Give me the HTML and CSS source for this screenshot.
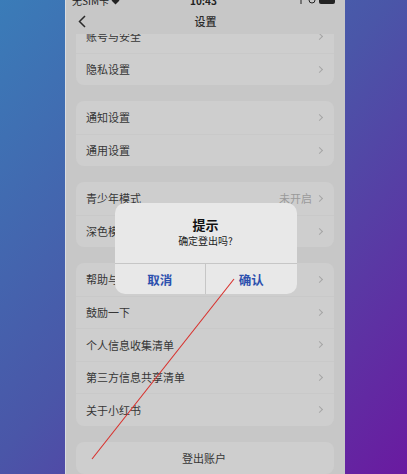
FILE: index.html
```html
<!DOCTYPE html>
<html lang="zh-CN">
<head>
    <meta charset="UTF-8">
    <meta name="viewport" content="width=device-width, initial-scale=1.0">
    <title>设置</title>
    <link rel="stylesheet" href="styles.css">
</head>
<body>
    <div class="stage">
        <div class="phone">
            <div class="status">
                <span class="carrier">无SIM卡 <svg width="9" height="7" viewBox="0 0 9 7"><path d="M0.5 2.5 Q4.5 -0.5 8.5 2.5 L4.5 6.5 Z" fill="#222"/></svg></span>
                <span class="clock">10:43</span>
                <span class="status-icons">
                    <svg width="8" height="8" viewBox="0 0 8 8"><path d="M4 0 L4 8 M1 3 L4 0 L7 3" stroke="#222" fill="none"/></svg>
                    <svg width="8" height="8" viewBox="0 0 8 8"><circle cx="4" cy="4" r="3" stroke="#222" fill="none"/></svg>
                    <span class="battery"></span>
                </span>
            </div>

            <header class="navbar">
                <svg class="back" width="8" height="13" viewBox="0 0 8 13"><polyline points="7,1 1.5,6.5 7,12" fill="none" stroke="#2a2a2a" stroke-width="1.5"/></svg>
                <h1 class="nav-title">设置</h1>
                <span class="nav-side"></span>
            </header>

            <main class="scroll">
                <div class="scroll-inner">
                    <div class="card">
                        <div class="row"><span>账号与安全</span><i class="chev"></i></div>
                        <div class="row"><span>隐私设置</span><i class="chev"></i></div>
                    </div>
                    <div class="card">
                        <div class="row"><span>通知设置</span><i class="chev"></i></div>
                        <div class="row"><span>通用设置</span><i class="chev"></i></div>
                    </div>
                    <div class="card">
                        <div class="row"><span>青少年模式</span><em class="value">未开启</em><i class="chev"></i></div>
                        <div class="row"><span>深色模式</span><i class="chev"></i></div>
                    </div>
                    <div class="card">
                        <div class="row"><span>帮助与反馈</span><i class="chev"></i></div>
                        <div class="row"><span>鼓励一下</span><i class="chev"></i></div>
                        <div class="row"><span>个人信息收集清单</span><i class="chev"></i></div>
                        <div class="row"><span>第三方信息共享清单</span><i class="chev"></i></div>
                        <div class="row"><span>关于小红书</span><i class="chev"></i></div>
                    </div>
                    <div class="card">
                        <div class="row row-center"><span>登出账户</span></div>
                    </div>
                </div>
            </main>

            <!-- 确认弹窗 -->
            <div class="mask">
                <div class="alert">
                    <div class="alert-body">
                        <h2>提示</h2>
                        <p>确定登出吗?</p>
                    </div>
                    <div class="alert-actions">
                        <button>取消</button>
                        <button>确认</button>
                    </div>
                </div>
            </div>
        </div>

        <svg class="mark" width="407" height="474" viewBox="0 0 407 474">
            <line x1="92" y1="459" x2="234" y2="279" stroke="#d8302c" stroke-width="1.1"/>
        </svg>
    </div>
</body>
</html>
```

FILE: styles.css
```css
* {
    box-sizing: border-box;
}

body {
    margin: 0;
    font-family: "Noto Sans CJK SC", "Noto Sans", sans-serif;
}

.stage {
    position: relative;
    width: 407px;
    height: 474px;
    overflow: hidden;
    background: linear-gradient(to bottom right, #3a7cb8, #4a56a8 48%, #6a1aa0);
}

.phone {
    position: relative;
    width: 280px;
    height: 474px;
    margin-left: 65px;
    background: #c7c7c7;
    border-left: 1px solid #d9dbe0;
    overflow: hidden;
    display: flex;
    flex-direction: column;
    color: #333;
}

/* 状态栏 */
.status {
    height: 20px;
    margin-top: -10px;
    display: grid;
    grid-template-columns: 1fr auto 1fr;
    align-items: center;
    padding: 0 10px 0 6px;
    font-size: 10px;
    color: #222;
}

.carrier svg {
    vertical-align: middle;
}

.clock {
    font-weight: bold;
}

.status-icons {
    display: flex;
    align-items: center;
    justify-content: flex-end;
    gap: 3px;
}

.battery {
    width: 16px;
    height: 8px;
    background: #222;
    border-radius: 2px;
}

/* 导航栏 */
.navbar {
    height: 24px;
    display: grid;
    grid-template-columns: 1fr auto 1fr;
    align-items: center;
    position: relative;
    z-index: 1;
    background: #c7c7c7;
    padding: 0 12px 2px 12px;
}

.nav-title {
    margin: 0;
    font-size: 11px;
    font-weight: 500;
    color: #2a2a2a;
}

/* 列表 */
.scroll {
    flex: 1;
    overflow: hidden;
}

.scroll-inner {
    margin-top: -14px;
    display: flex;
    flex-direction: column;
    gap: 16px;
    padding: 0 11px 0 10px;
}

.card {
    background: #cecece;
    border-radius: 8px;
}

.row {
    height: 32.5px;
    display: flex;
    align-items: center;
    padding: 0 12px 0 10px;
    font-size: 11px;
    color: #363636;
    border-top: 1px solid #c9c9c9;
}

.row:first-child {
    border-top: none;
}

.row span {
    flex: 1;
}

.row-center span {
    text-align: center;
}

.value {
    font-style: normal;
    color: #9a9a9a;
    margin-right: 5px;
}

.chev {
    width: 5px;
    height: 5px;
    border-top: 1px solid #a6a6a6;
    border-right: 1px solid #a6a6a6;
    transform: rotate(45deg);
}

/* 弹窗 */
.mask {
    position: absolute;
    inset: 0;
    display: flex;
    justify-content: center;
    align-items: flex-start;
    padding-top: 203px;
}

.alert {
    width: 182px;
    background: #e8e8e8;
    border-radius: 10px;
    overflow: hidden;
}

.alert-body {
    height: 60px;
    padding-top: 13px;
    text-align: center;
}

.alert-body h2 {
    margin: 0;
    font-size: 13px;
    line-height: 18px;
    color: #111;
}

.alert-body p {
    margin: 0;
    font-size: 10px;
    line-height: 14px;
    color: #222;
}

.alert-actions {
    display: flex;
    border-top: 1px solid #c6c6c6;
}

.alert-actions button {
    flex: 1;
    height: 30px;
    border: none;
    background: none;
    font-family: inherit;
    font-size: 12.5px;
    font-weight: bold;
    color: #2c50ae;
    padding: 0;
}

.alert-actions button + button {
    border-left: 1px solid #c6c6c6;
}

.mark {
    position: absolute;
    top: 0;
    left: 0;
    pointer-events: none;
}
```
